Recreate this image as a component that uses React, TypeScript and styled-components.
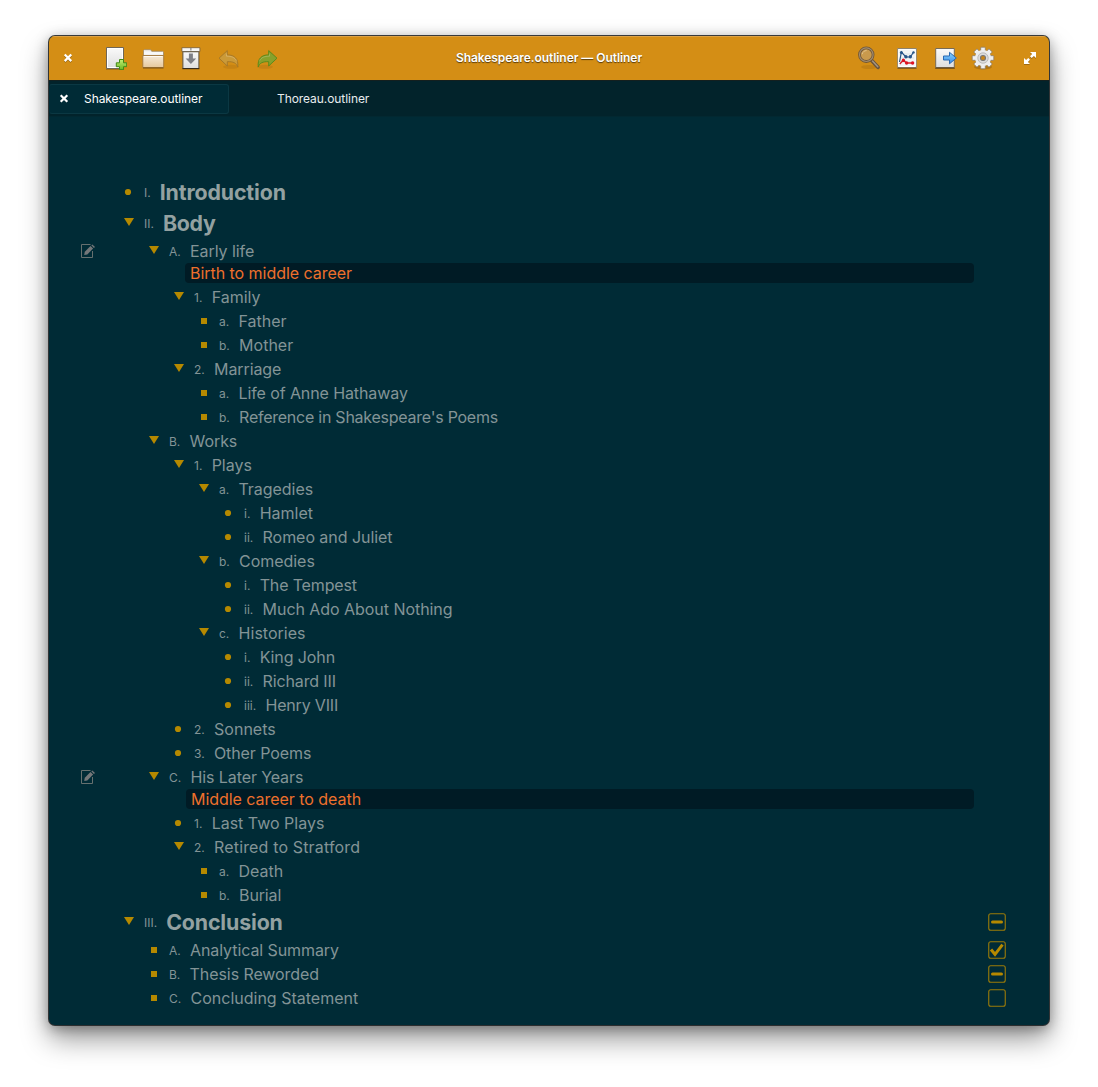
import React from "react";
import styled, { createGlobalStyle } from "styled-components";

const Global = createGlobalStyle`
  html, body { margin: 0; padding: 0; background: #fff; }
  body { font-family: Inter, "Open Sans", sans-serif; width: 1098px; height: 1087px; overflow: hidden; }
  * { box-sizing: border-box; }
  svg { display: block; }
`;

const GOLD = "#b58900";

const Desktop = styled.div`
  padding: 36px 49px 62px;
  height: 1087px;
`;

const Window = styled.main`
  height: 989px;
  border-radius: 6px;
  background: #002b36;
  display: flex;
  flex-direction: column;
  overflow: hidden;
  box-shadow: 0 0 0 1px rgba(28, 30, 32, 0.85), 0 14px 28px rgba(0, 0, 0, 0.4),
    0 3px 14px rgba(0, 0, 0, 0.35);
`;

const HeaderBar = styled.header`
  height: 44px;
  flex: none;
  background: #d48e15;
  box-shadow: inset 0 1px 0 #dda144;
  display: grid;
  grid-template-columns: 1fr auto 1fr;
  align-items: center;
`;

const Title = styled.h1`
  margin: 0;
  font-size: 12px;
  font-weight: 600;
  line-height: 44px;
  letter-spacing: -0.06px;
  color: #fff;
  text-shadow: 0 1px 1px rgba(0, 0, 0, 0.6);
`;

const Tools = styled.div<{ $end?: boolean }>`
  display: flex;
  align-items: center;
  gap: 14px;
  padding: ${(p) => (p.$end ? "0 13px 0 0" : "0 0 0 13px")};
  justify-content: ${(p) => (p.$end ? "flex-end" : "flex-start")};
`;

const ToolButton = styled.button<{ $small?: boolean; $push?: "left" | "right" }>`
  border: 0;
  padding: 0;
  background: none;
  width: ${(p) => (p.$small ? 12 : 24)}px;
  height: ${(p) => (p.$small ? 14 : 24)}px;
  flex: none;
  margin-left: ${(p) => (p.$push === "left" ? 15 : 0)}px;
  margin-right: ${(p) => (p.$push === "right" ? 15 : 0)}px;
`;

const TabBar = styled.nav`
  height: 37px;
  flex: none;
  background: #02232b;
  border-top: 1px solid #131f1f;
  border-bottom: 1px solid #022831;
  padding-top: 3px;
  display: flex;
`;

const Tab = styled.div<{ $active?: boolean }>`
  height: 30px;
  width: 180px;
  display: flex;
  align-items: center;
  padding: 0 0 2px ${(p) => (p.$active ? 9 : 47)}px;
  gap: 15px;
  font-size: 12px;
  letter-spacing: -0.07px;
  color: ${(p) => (p.$active ? "#fff" : "#e8edee")};
  background: ${(p) => (p.$active ? "#002b36" : "transparent")};
  border: 1px solid ${(p) => (p.$active ? "#0b3843" : "transparent")};
  border-left-color: transparent;
  border-radius: 3px;
`;

const Outline = styled.section`
  padding-top: 60px;
  display: flex;
  flex-direction: column;
`;

const Row = styled.div<{ $big?: boolean }>`
  height: ${(p) => (p.$big ? 31 : 24)}px;
  display: grid;
  grid-template-columns: 75px 1fr 61px;
  align-items: center;
`;

const NoteCell = styled.div`
  padding: 0 0 1px 32px;
`;

const Entry = styled.div<{ $depth: number; $big?: boolean }>`
  display: flex;
  align-items: center;
  height: ${(p) => (p.$big ? 31 : 24)}px;
  padding-left: ${(p) => p.$depth * 25}px;
  line-height: ${(p) => (p.$big ? 31 : 24)}px;
`;

const Marker = styled.svg<{ $lift: number }>`
  width: 10px;
  height: 10px;
  margin: 0 10px ${(p) => p.$lift * 2}px 0;
  flex: none;
`;

const Index = styled.span<{ $big?: boolean }>`
  font-size: 12px;
  line-height: 16px;
  padding-top: ${(p) => (p.$big ? 1 : 2)}px;
  color: #839496;
  margin-right: ${(p) => (p.$big ? 9 : 9.3)}px;
  white-space: nowrap;
`;

const Name = styled.span<{ $big?: boolean; $track: number }>`
  font-size: ${(p) => (p.$big ? 21.33 : 16)}px;
  font-weight: ${(p) => (p.$big ? 700 : 400)};
  letter-spacing: ${(p) => p.$track}px;
  color: ${(p) => (p.$big ? "#93a1a1" : "#839496")};
  white-space: nowrap;
`;

const Note = styled.div<{ $left: number }>`
  height: 20px;
  margin: 0 75px 2px ${(p) => p.$left}px;
  padding-left: 5px;
  border-radius: 4px;
  background: #001b25;
  color: #ee702c;
  font-size: 16px;
  letter-spacing: -0.04px;
  line-height: 20px;
`;

const CheckCell = styled.div<{ $big?: boolean }>`
  padding-bottom: ${(p) => (p.$big ? 1 : 0)}px;
`;

type Kind = "open" | "dot" | "square";
type Check = "partial" | "done" | "empty";
interface Item {
  d: number;
  k: Kind;
  i: string;
  t: string;
  big?: boolean;
  track?: number;
  note?: string;
  noteLeft?: number;
  check?: Check;
}

const items: Item[] = [
  { d: 0, k: "dot", i: "I.", t: "Introduction", big: true, track: -0.12 },
  { d: 0, k: "open", i: "II.", t: "Body", big: true, track: -0.25 },
  { d: 1, k: "open", i: "A.", t: "Early life", track: -0.07, note: "Birth to middle career", noteLeft: 136 },
  { d: 2, k: "open", i: "1.", t: "Family" },
  { d: 3, k: "square", i: "a.", t: "Father" },
  { d: 3, k: "square", i: "b.", t: "Mother" },
  { d: 2, k: "open", i: "2.", t: "Marriage", track: -0.1 },
  { d: 3, k: "square", i: "a.", t: "Life of Anne Hathaway", track: -0.1 },
  { d: 3, k: "square", i: "b.", t: "Reference in Shakespeare's Poems", track: -0.25 },
  { d: 1, k: "open", i: "B.", t: "Works", track: -0.1 },
  { d: 2, k: "open", i: "1.", t: "Plays" },
  { d: 3, k: "open", i: "a.", t: "Tragedies", track: -0.05 },
  { d: 4, k: "dot", i: "i.", t: "Hamlet" },
  { d: 4, k: "dot", i: "ii.", t: "Romeo and Juliet", track: -0.05 },
  { d: 3, k: "open", i: "b.", t: "Comedies", track: -0.05 },
  { d: 4, k: "dot", i: "i.", t: "The Tempest", track: -0.15 },
  { d: 4, k: "dot", i: "ii.", t: "Much Ado About Nothing", track: -0.05 },
  { d: 3, k: "open", i: "c.", t: "Histories" },
  { d: 4, k: "dot", i: "i.", t: "King John", track: -0.1 },
  { d: 4, k: "dot", i: "ii.", t: "Richard III", track: -0.13 },
  { d: 4, k: "dot", i: "iii.", t: "Henry VIII", track: -0.18 },
  { d: 2, k: "dot", i: "2.", t: "Sonnets" },
  { d: 2, k: "dot", i: "3.", t: "Other Poems", track: -0.08 },
  { d: 1, k: "open", i: "C.", t: "His Later Years", track: -0.1, note: "Middle career to death", noteLeft: 137 },
  { d: 2, k: "dot", i: "1.", t: "Last Two Plays" },
  { d: 2, k: "open", i: "2.", t: "Retired to Stratford", track: 0.15 },
  { d: 3, k: "square", i: "a.", t: "Death" },
  { d: 3, k: "square", i: "b.", t: "Burial", track: -0.15 },
  { d: 0, k: "open", i: "III.", t: "Conclusion", big: true, track: -0.12, check: "partial" },
  { d: 1, k: "square", i: "A.", t: "Analytical Summary", track: -0.09, check: "done" },
  { d: 1, k: "square", i: "B.", t: "Thesis Reworded", track: -0.08, check: "partial" },
  { d: 1, k: "square", i: "C.", t: "Concluding Statement", check: "empty" },
];

const Bullet = ({ kind, big }: { kind: Kind; big?: boolean }) => (
  <Marker viewBox="0 0 10 10" fill={GOLD} $lift={big ? (kind === "open" ? 1.5 : 0.5) : kind === "open" ? 1 : 0}>
    {kind === "open" && <path d="M0 1h10L5 9z" />}
    {kind === "dot" && <circle cx="4" cy="5" r="3.1" />}
    {kind === "square" && <path d="M2 2h6v6H2z" />}
  </Marker>
);

const CheckBox = ({ state }: { state: Check }) => (
  <svg width="18" height="18" viewBox="0 0 18 18" fill="none" stroke={GOLD}>
    <rect x=".75" y=".75" width="16.5" height="16.5" rx="2" strokeWidth="1.1" opacity=".85" />
    {state === "partial" && <path d="M4.5 9h9" strokeWidth="3" strokeLinecap="round" />}
    {state === "done" && <path d="M3 8.5l4 4.8L14.5 3.6" strokeWidth="3" />}
  </svg>
);

const NoteIcon = () => (
  <svg width="15" height="14" viewBox="0 0 15 14" fill="none">
    <path d="M9.5.5H.5v13h11V7" stroke="#66706f" strokeWidth="1" />
    <path d="M3.2 11l.6-3.2L9.5 2.1l2.6 2.5-5.8 5.8z" fill="#747779" />
    <path d="M10.3 1.3l1-.9 2.7 2.5-1.1 1z" fill="#747779" />
  </svg>
);

const CloseIcon = () => (
  <svg width="12" height="14" viewBox="0 0 12 14" stroke="#fff" strokeWidth="2.2">
    <path d="M2.7 4.3l6.6 6.6M9.3 4.3l-6.6 6.6" stroke="#5f4010" opacity=".6" />
    <path d="M2.7 3.5l6.6 6.6M9.3 3.5l-6.6 6.6" />
  </svg>
);

const NewIcon = () => (
  <svg width="24" height="24" viewBox="0 0 24 24">
    <defs>
      <linearGradient id="paper" x2="0" y2="1">
        <stop stopColor="#fafafa" />
        <stop offset="1" stopColor="#dedede" />
      </linearGradient>
      <linearGradient id="plus" x2="0" y2="1">
        <stop stopColor="#c5ef72" />
        <stop offset="1" stopColor="#68b723" />
      </linearGradient>
    </defs>
    <path d="M3 23.3h18" stroke="#3b2b10" opacity=".35" />
    <path d="M3.5 1.5h17v21h-17z" fill="url(#paper)" stroke="#6f6657" />
    <path d="M4.5 2.5h15v19h-15z" fill="none" stroke="#fff" />
    <path d="M16.5 13.5h4v3.3h3.2v3.9h-3.2v3h-4v-3h-3.2v-3.9h3.2z" fill="url(#plus)" stroke="#3f8a17" />
  </svg>
);

const OpenIcon = () => (
  <svg width="24" height="24" viewBox="0 0 24 24">
    <defs>
      <linearGradient id="folder" x2="0" y2="1">
        <stop stopColor="#f6ead9" />
        <stop offset="1" stopColor="#e6c89b" />
      </linearGradient>
    </defs>
    <path d="M2.5 10V4.5l.8-.8h6.4l1 1.6h11l.8.8V10z" fill="#f2f2f1" stroke="#a08966" strokeWidth=".8" />
    <path d="M3 7h19" stroke="#fff" />
    <path d="M1.8 9.5h20.9v12H1.8z" fill="url(#folder)" stroke="#a0763b" strokeWidth=".9" />
    <path d="M2 22h20.5" stroke="#765019" />
    <path d="M3 10.5h18.5" stroke="#fffaf2" />
  </svg>
);

const SaveIcon = () => (
  <svg width="24" height="24" viewBox="0 0 24 24">
    <g transform="translate(-.6 0)">
      <path d="M4.5 5.5h16v17h-16z" fill="url(#paper)" stroke="#5b5346" />
      <path d="M3.5 1.7h18v3.8h-18z" fill="#f7f7f7" stroke="#765b34" strokeWidth=".8" />
      <path d="M12.5 2v2.5" stroke="#777" />
      <path d="M4.5 5.8h16" stroke="#6b6558" />
      <path d="M4 22.7h17" stroke="#302514" />
      <path d="M10.5 7.5h4v5h3.3l-5.3 5.4-5.3-5.4h3.3z" fill="#7e8087" />
    </g>
  </svg>
);

const TurnIcon = ({ redo }: { redo?: boolean }) => (
  <svg width="24" height="24" viewBox="0 0 24 24">
    <g transform={redo ? "translate(24 0) scale(-1 1)" : undefined}>
      <ellipse cx="14" cy="20.8" rx="8" ry="2" fill="#9a6510" opacity=".25" />
      <path
        d="M10.3 4.6v4.3c7-.2 11.5 3.9 10.4 12-1.3-3.9-4.4-5.5-10.4-5.2V20L2 12.2z"
        fill={redo ? "#87a12c" : "#cb9a38"}
        stroke={redo ? "#5e8a1a" : "#a87927"}
        strokeLinejoin="round"
      />
      <path d="M9.5 7.4v2.8c5 0 8.6 1.3 9.9 4.6" fill="none" stroke="#fff" opacity=".2" />
    </g>
  </svg>
);

const SearchIcon = () => (
  <svg width="24" height="24" viewBox="0 0 24 24" fill="none">
    <ellipse cx="12" cy="21" rx="8" ry="2" fill="#8a5a0e" opacity=".25" />
    <path d="M14 13.8l7 7.5" stroke="#69533b" strokeWidth="3.8" strokeLinecap="round" />
    <path d="M15.5 15l5.3 5.7" stroke="#a39482" strokeWidth="1.5" strokeLinecap="round" />
    <circle cx="9.3" cy="8.7" r="6.8" fill="#c99a4d" stroke="#6f5638" strokeWidth="2.8" />
    <circle cx="9.3" cy="8.7" r="6.8" stroke="#a08b6e" strokeWidth="1.1" />
    <path d="M5.2 8.2c.4-2.3 2.2-3.7 4.4-3.6" stroke="#e2c28c" />
  </svg>
);

const StatsIcon = () => (
  <svg width="24" height="24" viewBox="0 0 24 24" fill="none">
    <path d="M2.7 2.5h18.6v19H2.7z" fill="#f3f4f5" stroke="#8d8370" />
    <path d="M2.5 22.2h19" stroke="#66451a" />
    <path d="M3.7 3.5h16.6v17H3.7z" stroke="#fff" />
    <path d="M5 8h14M5 12h14M5 16h14" stroke="#dfe2e5" />
    <path d="M4.5 16L6.4 6l4.4 5h4.6L18.6 6" stroke="#275487" strokeWidth="1.2" />
    <path d="M4.8 18l3.6-4 3 3h6.4" stroke="#d3202b" strokeWidth="1.3" />
    <g fill="#275487">
      <circle cx="6.4" cy="6.4" r="1.5" />
      <circle cx="10.9" cy="10.8" r="1.7" />
      <circle cx="15.3" cy="10.8" r="1.7" />
      <circle cx="18.5" cy="6.4" r="1.2" />
    </g>
    <g fill="#df1321">
      <circle cx="8.4" cy="14.2" r="1.6" />
      <circle cx="11.6" cy="17" r="1.7" />
      <circle cx="17.6" cy="17" r="1.7" />
    </g>
  </svg>
);

const ExportIcon = () => (
  <svg width="24" height="24" viewBox="0 0 24 24">
    <defs>
      <linearGradient id="blue" x2="0" y2="1">
        <stop stopColor="#8cd5ff" />
        <stop offset="1" stopColor="#3689e6" />
      </linearGradient>
    </defs>
    <path d="M2.7 2.5h18.6v19H2.7z" fill="url(#paper)" stroke="#776b57" />
    <path d="M2.2 22.2h19.6" stroke="#553c18" />
    <path d="M10.5 10h6V6.3l6.8 5.7-6.8 5.8V14h-6z" fill="url(#blue)" stroke="#2868b2" />
  </svg>
);

const GearIcon = () => (
  <svg width="24" height="24" viewBox="0 0 24 24">
    <ellipse cx="12" cy="21" rx="9" ry="2.5" fill="#704b12" opacity=".35" />
    <g fill="#f0f0f0" stroke="#8a7e6c" strokeWidth=".8">
      {[0, 45, 90, 135].map((a) => (
        <rect key={a} x="9.7" y="1.2" width="4.6" height="21.6" rx=".8" transform={`rotate(${a} 12 12)`} />
      ))}
    </g>
    <circle cx="12" cy="12" r="8" fill="#ededed" />
    <circle cx="12" cy="12" r="5.2" fill="#dcdcdc" stroke="#bcbcbc" />
    <circle cx="12" cy="12" r="2.5" fill="#c98517" stroke="#777" strokeWidth="1.1" />
  </svg>
);

const ExpandIcon = () => (
  <svg width="12" height="14" viewBox="0 0 12 14">
    <g fill="#7c5311" opacity=".6" transform="translate(0 1)">
      <path d="M6 1h6v6L9.9 4.9 7.7 7 6 5.3l2.1-2.2zM0 7l2.1 2.1L4.3 7 6 8.7l-2.1 2.2L6 13H0z" />
    </g>
    <path
      d="M6 1h6v6L9.9 4.9 7.7 7 6 5.3l2.1-2.2zM0 7l2.1 2.1L4.3 7 6 8.7l-2.1 2.2L6 13H0z"
      fill="#fff"
    />
  </svg>
);

export default function App() {
  return (
    <Desktop>
      <Global />
      <Window>
        <HeaderBar>
          <Tools>
            <ToolButton $small $push="right"><CloseIcon /></ToolButton>
            <ToolButton><NewIcon /></ToolButton>
            <ToolButton><OpenIcon /></ToolButton>
            <ToolButton><SaveIcon /></ToolButton>
            <ToolButton><TurnIcon /></ToolButton>
            <ToolButton><TurnIcon redo /></ToolButton>
          </Tools>
          <Title>Shakespeare.outliner — Outliner</Title>
          <Tools $end>
            <ToolButton><SearchIcon /></ToolButton>
            <ToolButton><StatsIcon /></ToolButton>
            <ToolButton><ExportIcon /></ToolButton>
            <ToolButton><GearIcon /></ToolButton>
            <ToolButton $small $push="left"><ExpandIcon /></ToolButton>
          </Tools>
        </HeaderBar>
        <TabBar>
          <Tab $active>
            <svg width="10" height="10" viewBox="0 0 10 10" stroke="#fff" strokeWidth="2.2">
              <path d="M1.7 2.2l6.6 6.6M8.3 2.2L1.7 8.8" />
            </svg>
            Shakespeare.outliner
          </Tab>
          <Tab>Thoreau.outliner</Tab>
        </TabBar>
        <Outline>
          {items.map((it, n) => (
            <React.Fragment key={n}>
              <Row $big={it.big}>
                <NoteCell>{it.note && <NoteIcon />}</NoteCell>
                <Entry $depth={it.d} $big={it.big}>
                  <Bullet kind={it.k} big={it.big} />
                  <Index $big={it.big}>{it.i}</Index>
                  <Name $big={it.big} $track={it.track ?? 0}>{it.t}</Name>
                </Entry>
                {it.check && (
                  <CheckCell $big={it.big}>
                    <CheckBox state={it.check} />
                  </CheckCell>
                )}
              </Row>
              {it.note && <Note $left={it.noteLeft ?? 136}>{it.note}</Note>}
            </React.Fragment>
          ))}
        </Outline>
      </Window>
    </Desktop>
  );
}
